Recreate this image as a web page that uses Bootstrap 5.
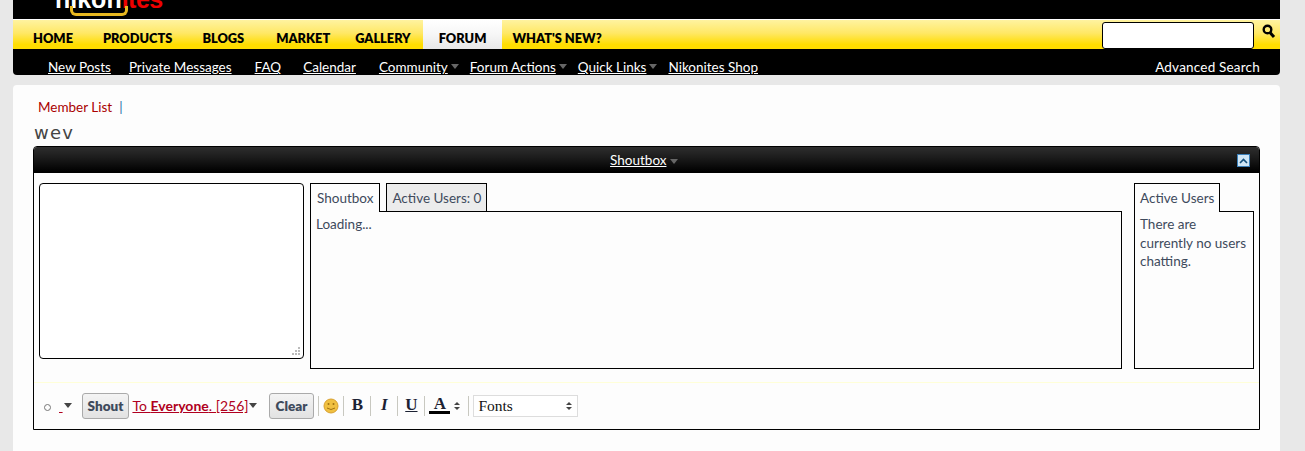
<!DOCTYPE html>
<html lang="en">
  <head>
    <meta charset="UTF-8" />
    <title>Nikonites Forum - Shoutbox</title>
    <link href="https://cdn.jsdelivr.net/npm/bootstrap@5.3.0/dist/css/bootstrap.min.css" rel="stylesheet" />
    <style>
      html, body { height: 451px; overflow: hidden; }
      body {
        background: #e8e8e8;
        font-family: Lato, "Liberation Sans", sans-serif;
        font-size: 13.5px;
        color: #3e4a5c;
      }
      a { color: inherit; }
      .site-wrap { margin: 0 25px 0 13px; }
      .logo-bar { height: 19px; background: #000; overflow: hidden; padding-left: 42px; }
      .logo-box {
        position: relative; height: 17px; margin-top: -9px;
        font: bold 25px/16px "Liberation Sans", sans-serif;
        color: #fff; white-space: nowrap;
      }
      .logo-frame {
        position: absolute; left: 15px; top: 15px; width: 58px; height: 10px;
        border: 3px solid #e8b820; border-top: 0; border-radius: 0 0 6px 6px;
      }
      .logo-red { color: #e00; letter-spacing: -.5px; }
      .tab-bar {
        height: 30px;
        background: linear-gradient(#fff3a0 0, #ffe866 45%, #ffdd00 85%);
        border-top: 1px solid #fff;
        padding-left: 20px;
      }
      .tab-link {
        font-weight: 800; font-size: 12.8px; color: #000; text-decoration: none; white-space: nowrap;
        padding: 9px 0 0; display: block; height: 29px; line-height: 18px;
      }
      .tab-link:nth-child(2) { margin-left: 30px; }
      .tab-link:nth-child(3) { margin-left: 30px; }
      .tab-link:nth-child(4) { margin-left: 32px; }
      .tab-link:nth-child(5) { margin-left: 25px; }
      .tab-link:nth-child(6) { margin-left: 12px; padding-left: 16px; padding-right: 16px; }
      .tab-link:nth-child(7) { margin-left: 10px; }
      .tab-link.on { background: linear-gradient(#fff 0, #f6f6f6 50%, #e8e8e8 100%); }
      .search-box {
        width: 152px; height: 27px; background: #fff;
        border: 1px solid #000; border-radius: 3px; margin: 2px 8px 0 0;
      }
      .sub-bar {
        height: 26px; background: #000; color: #fff;
        border-radius: 0 0 4px 4px; padding: 9px 20px 0 35px; line-height: 18px;
      }
      .sub-bar a { color: #fff; margin-right: 22px; }
      .sub-bar a:nth-child(1) { margin-right: 18px; }
      .sub-bar a:nth-child(2), .sub-bar a:nth-child(4) { margin-right: 23px; }
      .sub-bar a.more { margin-right: 3px; }
      .sub-bar a.plain { margin-right: 0; text-decoration: none; letter-spacing: .2px; }
      .arrow-gray {
        display: inline-block; width: 0; height: 0; margin-right: 11px; align-self: center;
        border: 4px solid transparent; border-top: 5px solid #666; border-bottom: 0;
        vertical-align: 1px;
      }
      .main-panel {
        margin-top: 10px; height: 366px; background: #fdfdfd;
        border-radius: 4px 4px 0 0; padding: 12px 20px 0 20px;
      }
      .crumb { height: 20px; padding-left: 5px; line-height: 20px; }
      .crumb a { color: #a00; text-decoration: none; }
      .crumb span { color: #2a6ea8; margin-left: 7px; }
      .page-name {
        font-family: "DejaVu Sans", sans-serif; font-size: 18px; letter-spacing: 1.2px;
        line-height: 20px; height: 20px; margin: 6px 0 3px 1px; color: #444;
      }
      .box-wrap { border: 1px solid #000; border-radius: 4px 4px 0 0; height: 284px; background: #fdfdfd; }
      .box-head {
        height: 26px; color: #fff; border-radius: 3px 3px 0 0;
        background: linear-gradient(#2e2e2e 0, #1c1c1c 40%, #000 95%);
        padding: 3px 9px 0 0; line-height: 20px;
      }
      .box-title { flex: 1; text-align: center; padding-left: 17px; }
      .collapse-btn {
        width: 13px; height: 13px; background: #cfe6f6; border: 1px solid #3b7fb8;
        display: flex; align-items: center; justify-content: center;
      }
      .shout-area { padding: 10px 5px 0; height: 209px; }
      .input-pane {
        width: 265px; height: 176px; background: #fff; border: 1px solid #000;
        border-radius: 4px; margin-right: 6px; position: relative; flex: none;
      }
      .grip { position: absolute; right: 2px; bottom: 2px; }
      .tab-col { display: flex; flex-direction: column; }
      .tab-col.wide { flex: 1; margin-right: 12px; }
      .tab-col.narrow { width: 120px; }
      .tab-col.narrow .sb-tab { padding-left: 5px; padding-right: 5px; }
      .tab-row { display: flex; gap: 6px; height: 29px; }
      .sb-tab {
        border: 1px solid #000; border-bottom: 0; padding: 4px 6px 0; height: 29px;
        background: #fdfdfd; position: relative; z-index: 1; line-height: 20px;
      }
      .sb-tab.off { background: #ececec; height: 28px; padding-left: 5px; padding-right: 5px; }
      .sb-body {
        border: 1px solid #000; background: #fdfdfd; padding: 3px 5px; margin-top: -1px;
        line-height: 18.5px; height: 158px;
      }
      .tool-row {
        border-top: 1px solid #ffffd8; height: 47px;
        padding: 0 0 0 9px; display: flex; align-items: center;
      }
      .dot-mark { width: 7px; height: 7px; border: 1px solid #777; border-radius: 50%; margin: 3px 8px 0 1px; }
      .to-link { color: #b00020; font-size: 14px; margin-top: -1px; }
      .arrow-dark {
        display: inline-block; width: 0; height: 0; margin-top: -2px;
        border: 4px solid transparent; border-top: 5px solid #444; border-bottom: 0;
      }
      .arrow-one { margin-right: 10px; margin-left: 1px; }
      .arrow-two { margin-right: 12px; }
      .gray-btn {
        height: 26px; padding: 0 5px; font-weight: 800; font-size: 13.5px; color: #3e4a5c;
        background: linear-gradient(#f4f4f4, #e2e2e2); border: 1px solid #aaa; border-radius: 3px;
        line-height: 24px; margin-top: -1px;
      }
      .gray-btn.clear-btn { padding: 0 6px; }
      .to-gap { margin-left: 3px; }
      .tool-sep { width: 1px; height: 20px; background: #c8c8c0; margin: 0 4px; }
      .tool-sep.last-sep { margin-left: 8px; }
      .ed-icon { font: bold 17px/20px "Liberation Serif", serif; color: #1c2233; width: 18px; text-align: center; margin-top: -3px; }
      .ed-color { border-bottom: 3px solid #000; line-height: 15px; width: 21px; margin-top: -2px; }
      .font-pick {
        width: 105px; height: 22px; border: 1px solid #ddd; background: #fff; color: #111;
        font: 15.5px/20px "Liberation Serif", serif; padding: 0 5px 0 4px; margin-top: -1px;
        display: flex; align-items: center; justify-content: space-between;
      }
      .updown { display: flex; flex-direction: column; gap: 2px; }
      .updown i { display: block; width: 0; height: 0; border: 3px solid transparent; }
      .updown i:first-child { border-bottom: 3px solid #444; border-top: 0; }
      .updown i:last-child { border-top: 3px solid #444; border-bottom: 0; }
    </style>
  </head>
  <body>
    <div class="site-wrap">
      <div class="logo-bar">
        <div class="logo-box"><span>nikon</span><span class="logo-red">ites</span><span class="logo-frame"></span></div>
      </div>
      <div class="tab-bar d-flex">
        <a class="tab-link" href="#">HOME</a>
        <a class="tab-link" href="#">PRODUCTS</a>
        <a class="tab-link" href="#">BLOGS</a>
        <a class="tab-link" href="#">MARKET</a>
        <a class="tab-link" href="#">GALLERY</a>
        <a class="tab-link on" href="#">FORUM</a>
        <a class="tab-link" href="#">WHAT'S NEW?</a>
        <div class="ms-auto d-flex">
          <div class="search-box"></div>
          <svg class="me-1 mt-1" width="14" height="16" viewBox="0 0 14 16"><circle cx="5.5" cy="5.5" r="3.8" fill="none" stroke="#000" stroke-width="2.4"/><path d="M8 8.5l4 4.5" stroke="#000" stroke-width="3"/></svg>
        </div>
      </div>
      <div class="sub-bar d-flex">
        <a href="#">New Posts</a>
        <a href="#">Private Messages</a>
        <a href="#">FAQ</a>
        <a href="#">Calendar</a>
        <a class="more" href="#">Community</a><i class="arrow-gray"></i>
        <a class="more" href="#">Forum Actions</a><i class="arrow-gray"></i>
        <a class="more" href="#">Quick Links</a><i class="arrow-gray"></i>
        <a href="#">Nikonites Shop</a>
        <a class="plain ms-auto" href="#">Advanced Search</a>
      </div>
      <div class="main-panel">
        <div class="crumb"><a href="#">Member List</a><span>|</span></div>
        <div class="page-name">wev</div>
        <div class="box-wrap">
          <div class="box-head d-flex">
            <div class="box-title"><a href="#">Shoutbox</a> <i class="arrow-gray m-0"></i></div>
            <div class="collapse-btn mt-1"><svg width="9" height="6" viewBox="0 0 9 6"><path d="M1 5l3.5-3.5L8 5" fill="none" stroke="#14507c" stroke-width="1.6"/></svg></div>
          </div>
          <div class="shout-area d-flex">
            <div class="input-pane">
              <svg class="grip" width="10" height="10" viewBox="0 0 10 10" fill="#bbb"><rect x="7" y="1" width="2" height="2"/><rect x="4" y="4" width="2" height="2"/><rect x="7" y="4" width="2" height="2"/><rect x="1" y="7" width="2" height="2"/><rect x="4" y="7" width="2" height="2"/><rect x="7" y="7" width="2" height="2"/></svg>
            </div>
            <div class="tab-col wide">
              <div class="tab-row">
                <div class="sb-tab">Shoutbox</div>
                <div class="sb-tab off">Active Users: 0</div>
              </div>
              <div class="sb-body">Loading...</div>
            </div>
            <div class="tab-col narrow">
              <div class="tab-row">
                <div class="sb-tab">Active Users</div>
              </div>
              <div class="sb-body">There are currently no users chatting.</div>
            </div>
          </div>
          <div class="tool-row">
            <i class="dot-mark"></i>
            <a class="to-link" href="#">&nbsp;</a><i class="arrow-dark arrow-one"></i>
            <span class="gray-btn">Shout</span>
            <a class="to-link to-gap" href="#">To <b>Everyone</b>. [256]</a><i class="arrow-dark arrow-two"></i>
            <span class="gray-btn clear-btn">Clear</span>
            <i class="tool-sep"></i>
            <svg width="16" height="16" viewBox="0 0 16 16"><circle cx="8" cy="8" r="7" fill="#f0c040" stroke="#d8a030"/><circle cx="5.5" cy="6" r="1" fill="#a07010"/><circle cx="10.5" cy="6" r="1" fill="#a07010"/><path d="M4 10q4 3 8 0" fill="none" stroke="#a07010"/></svg>
            <i class="tool-sep"></i>
            <span class="ed-icon">B</span>
            <i class="tool-sep"></i>
            <span class="ed-icon fst-italic">I</span>
            <i class="tool-sep"></i>
            <span class="ed-icon text-decoration-underline">U</span>
            <i class="tool-sep"></i>
            <span class="ed-icon ed-color">A</span>
            <span class="updown ms-1"><i></i><i></i></span>
            <i class="tool-sep last-sep"></i>
            <div class="font-pick"><span>Fonts</span><span class="updown"><i></i><i></i></span></div>
          </div>
        </div>
      </div>
    </div>
    <script src="https://cdn.jsdelivr.net/npm/bootstrap@5.3.0/dist/js/bootstrap.bundle.min.js"></script>
  </body>
</html>
